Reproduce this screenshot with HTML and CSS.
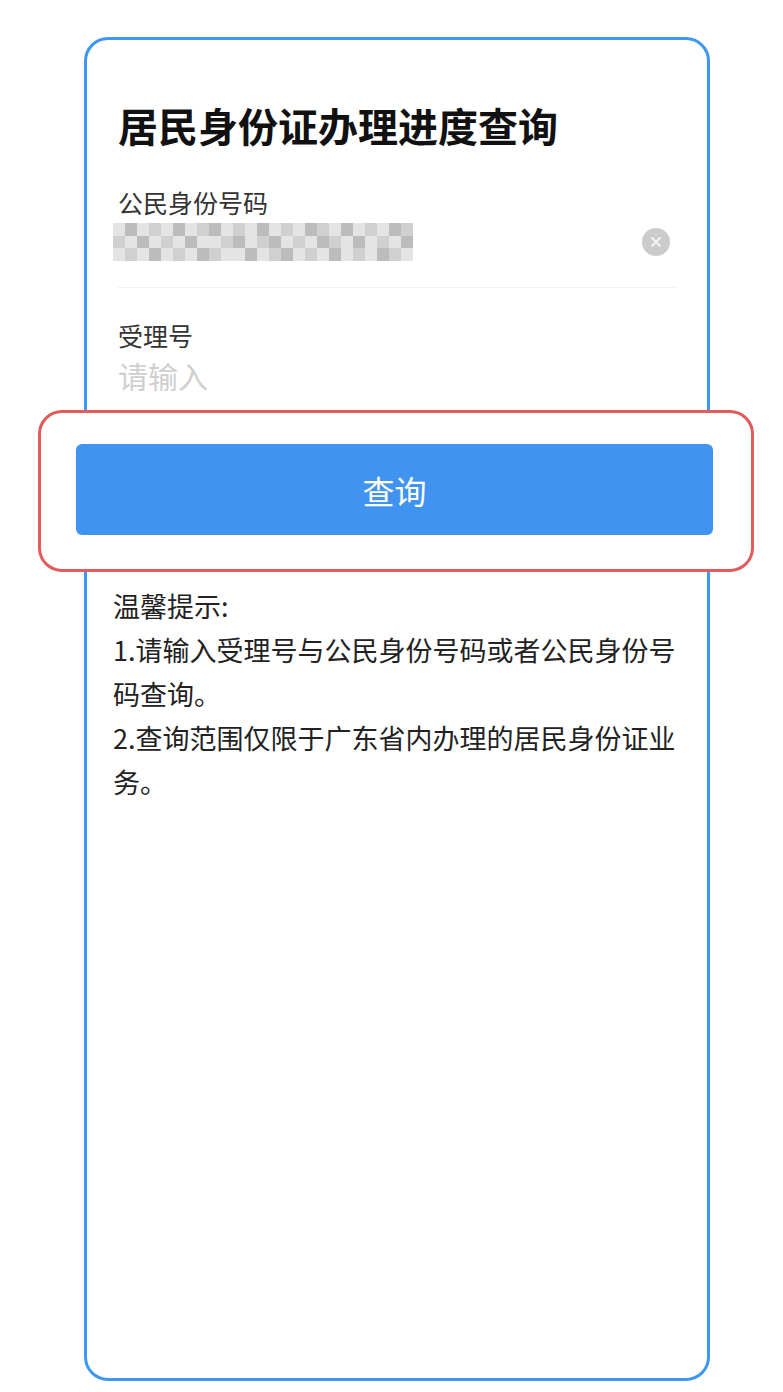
FILE: index.html
```html
<!DOCTYPE html>
<html lang="zh-CN">

<head>
    <meta charset="UTF-8">
    <meta name="viewport" content="width=device-width, initial-scale=1.0">
    <title>居民身份证办理进度查询</title>
    <link rel="stylesheet" href="styles.css">
</head>

<body>
    <div class="card">
        <h1 class="title">居民身份证办理进度查询</h1>

        <div class="field first">
            <div class="label">公民身份号码</div>
            <div class="input-row">
                <div class="mosaic">
                    <span class="l"></span><span class="d"></span><span class="l"></span><span class="m"></span><span class="l"></span><span class="d"></span><span class="l"></span><span class="m"></span><span class="d"></span><span class="l"></span><span class="m"></span><span class="l"></span><span class="d"></span><span class="l"></span><span class="m"></span><span class="l"></span><span class="d"></span><span class="m"></span><span class="l"></span><span class="d"></span><span class="l"></span><span class="m"></span><span class="l"></span><span class="d"></span><span class="m"></span>
                    <span class="m"></span><span class="l"></span><span class="d"></span><span class="l"></span><span class="m"></span><span class="l"></span><span class="d"></span><span class="l"></span><span class="l"></span><span class="m"></span><span class="d"></span><span class="l"></span><span class="m"></span><span class="d"></span><span class="l"></span><span class="m"></span><span class="l"></span><span class="d"></span><span class="m"></span><span class="l"></span><span class="d"></span><span class="l"></span><span class="m"></span><span class="l"></span><span class="d"></span>
                    <span class="l"></span><span class="m"></span><span class="l"></span><span class="d"></span><span class="l"></span><span class="m"></span><span class="l"></span><span class="d"></span><span class="m"></span><span class="l"></span><span class="l"></span><span class="d"></span><span class="l"></span><span class="m"></span><span class="d"></span><span class="l"></span><span class="m"></span><span class="l"></span><span class="d"></span><span class="l"></span><span class="m"></span><span class="l"></span><span class="d"></span><span class="m"></span><span class="l"></span>
                </div>
                <span class="clear">
                    <svg width="28" height="28" viewBox="0 0 28 28">
                        <circle cx="14" cy="14" r="14" fill="#cbcbcb"/>
                        <path d="M10 10 L18 18 M18 10 L10 18" stroke="#f4f4f4" stroke-width="2" stroke-linecap="round"/>
                    </svg>
                </span>
            </div>
        </div>

        <div class="field second">
            <div class="label">受理号</div>
            <div class="placeholder">请输入</div>
        </div>

        <div class="highlight">
            <button class="btn">查询</button>
        </div>

        <div class="tips">
            <p>温馨提示:</p>
            <p>1.请输入受理号与公民身份号码或者公民身份号码查询。</p>
            <p>2.查询范围仅限于广东省内办理的居民身份证业务。</p>
        </div>
    </div>
</body>

</html>
```

FILE: styles.css
```css
body {
    margin: 0;
    padding: 37px 0 0 84px;
    background-color: #fff;
    font-family: "Noto Sans CJK SC", "Noto Sans", sans-serif;
    color: #333;
}

.card {
    box-sizing: border-box;
    width: 626px;
    height: 1344px;
    padding: 57px 32px 0 31px;
    border: 3px solid #3f97f4;
    border-radius: 24px;
    background-color: #fff;
}

.title {
    margin: 0;
    font-size: 40px;
    line-height: 56px;
    font-weight: bold;
    color: #111;
}

.label {
    font-size: 25px;
    line-height: 34px;
    color: #333;
}

.field.first {
    margin-top: 32px;
    padding-bottom: 23px;
    border-bottom: 1px solid #f1f1f1;
}

.field.second {
    margin-top: 30px;
}

.input-row {
    display: flex;
    align-items: center;
    justify-content: space-between;
    height: 44px;
    margin-top: 1px;
}

.mosaic {
    display: grid;
    grid-template-columns: repeat(25, 12px);
    grid-template-rows: repeat(3, 12.5px);
    margin-left: -5px;
    filter: blur(0.6px);
}

.mosaic .l {
    background-color: #e4e4e4;
}

.mosaic .m {
    background-color: #d0d0d0;
}

.mosaic .d {
    background-color: #bcbcbc;
}

.clear {
    display: flex;
    margin-right: 5px;
}

.placeholder {
    margin-top: 3px;
    font-size: 30px;
    line-height: 40px;
    color: #cfcfcf;
}

.highlight {
    margin: 15px -79px 0 -80px;
    padding: 31px 38px 34px 35px;
    border: 3px solid #e25c5c;
    border-radius: 24px;
    background-color: #fff;
}

.btn {
    display: block;
    width: 100%;
    height: 91px;
    border: none;
    border-radius: 6px;
    background-color: #4193f0;
    color: #fff;
    font-family: inherit;
    font-size: 32px;
    cursor: pointer;
}

.tips {
    margin: 12px -10px 0 -5px;
    font-size: 27px;
    line-height: 44px;
    color: #222;
}

.tips p {
    margin: 0;
}
```
